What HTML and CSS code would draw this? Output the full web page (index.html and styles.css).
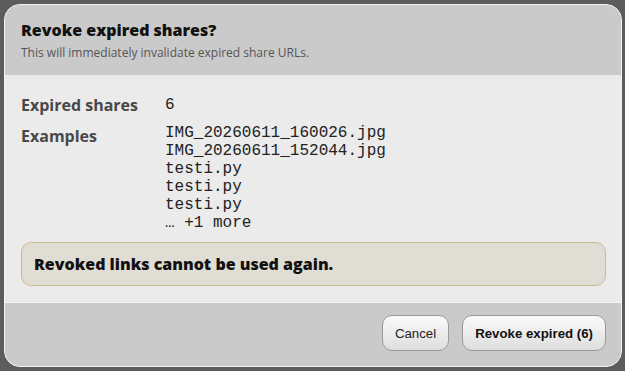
FILE: index.html
```html
<!DOCTYPE html>
<html lang="en">
<head>
  <meta charset="UTF-8">
  <meta name="viewport" content="width=device-width, initial-scale=1.0">
  <title>Revoke expired shares</title>
  <link rel="stylesheet" href="styles.css">
</head>
<body>
  <div class="backdrop">
    <div class="dialog">
      <div class="dialog-head">
        <h1 class="dialog-title">Revoke expired shares?</h1>
        <p class="dialog-sub">This will immediately invalidate expired share URLs.</p>
      </div>
      <div class="dialog-body">
        <div class="info-grid">
          <div class="info-label">Expired shares</div>
          <div class="info-value">6</div>
          <div class="info-label label-list">Examples</div>
          <div class="info-value">
            <div>IMG_20260611_160026.jpg</div>
            <div>IMG_20260611_152044.jpg</div>
            <div>testi.py</div>
            <div>testi.py</div>
            <div>testi.py</div>
            <div>… +1 more</div>
          </div>
        </div>
        <div class="notice">Revoked links cannot be used again.</div>
      </div>
      <div class="dialog-foot">
        <button class="btn" type="button">Cancel</button>
        <button class="btn btn-strong" type="button">Revoke expired (6)</button>
      </div>
    </div>
  </div>
</body>
</html>
```
FILE: styles.css
```css
* { margin: 0; padding: 0; box-sizing: border-box; }
body {
  background-color: #5c5c5c;
  font-family: "Open Sans", "DejaVu Sans", sans-serif;
  color: #222;
}
.backdrop {
  width: 625px; height: 371px;
  padding: 4px 3px 4px 4px;
}
.dialog {
  width: 618px; height: 363px;
  border: 1px solid #f4f4f4; border-radius: 16px;
  background-color: #ebebeb;
  overflow: hidden;
  display: flex;
  flex-direction: column;
}
.dialog-head {
  height: 70px;
  background-color: #cacaca;
  padding: 14px 16px 0 16px;
}
.dialog-title {
  font-size: 16px; font-weight: 800;
  color: #111;
  line-height: 22px;
}
.dialog-sub {
  font-size: 12px;
  color: #555;
  margin-top: 4px;
  line-height: 16px;
}
.dialog-body {
  flex: 1;
  padding: 21px 15px 16px 16px;
  border-bottom: 1px solid #f4f4f4;
}
.info-grid {
  display: grid;
  grid-template-columns: 144px 1fr;
  row-gap: 10px;
}
.info-label {
  font-size: 16px; font-weight: 700;
  color: #484848;
  line-height: 18px;
}
.label-list { padding-top: 3px; }
.info-value {
  font-family: "Liberation Mono", monospace;
  font-size: 16px;
  line-height: 18px;
  color: #222;
}
.notice {
  margin-top: 10px;
  height: 44px;
  border: 1px solid #cdbb8c; border-radius: 10px;
  background-color: #e0ddd4;
  padding: 0 12px;
  display: flex;
  align-items: center;
  font-size: 16px; font-weight: 800;
  color: #111;
}
.dialog-foot {
  height: 64px;
  background-color: #cacaca;
  display: flex;
  justify-content: flex-end;
  align-items: center;
  gap: 13px;
  padding: 0 15px 2px 0;
}
.btn {
  height: 36px;
  padding: 0 12px;
  border: 1px solid #9a9a9a; border-radius: 10px;
  background: linear-gradient(#fafafa, #dedede);
  font-family: "Liberation Sans", Arial, sans-serif;
  font-size: 13.25px;
  color: #222;
  cursor: pointer;
}
.btn-cancel { padding: 0 12.5px; }
.btn-strong { font-weight: 700; color: #111; }
```
